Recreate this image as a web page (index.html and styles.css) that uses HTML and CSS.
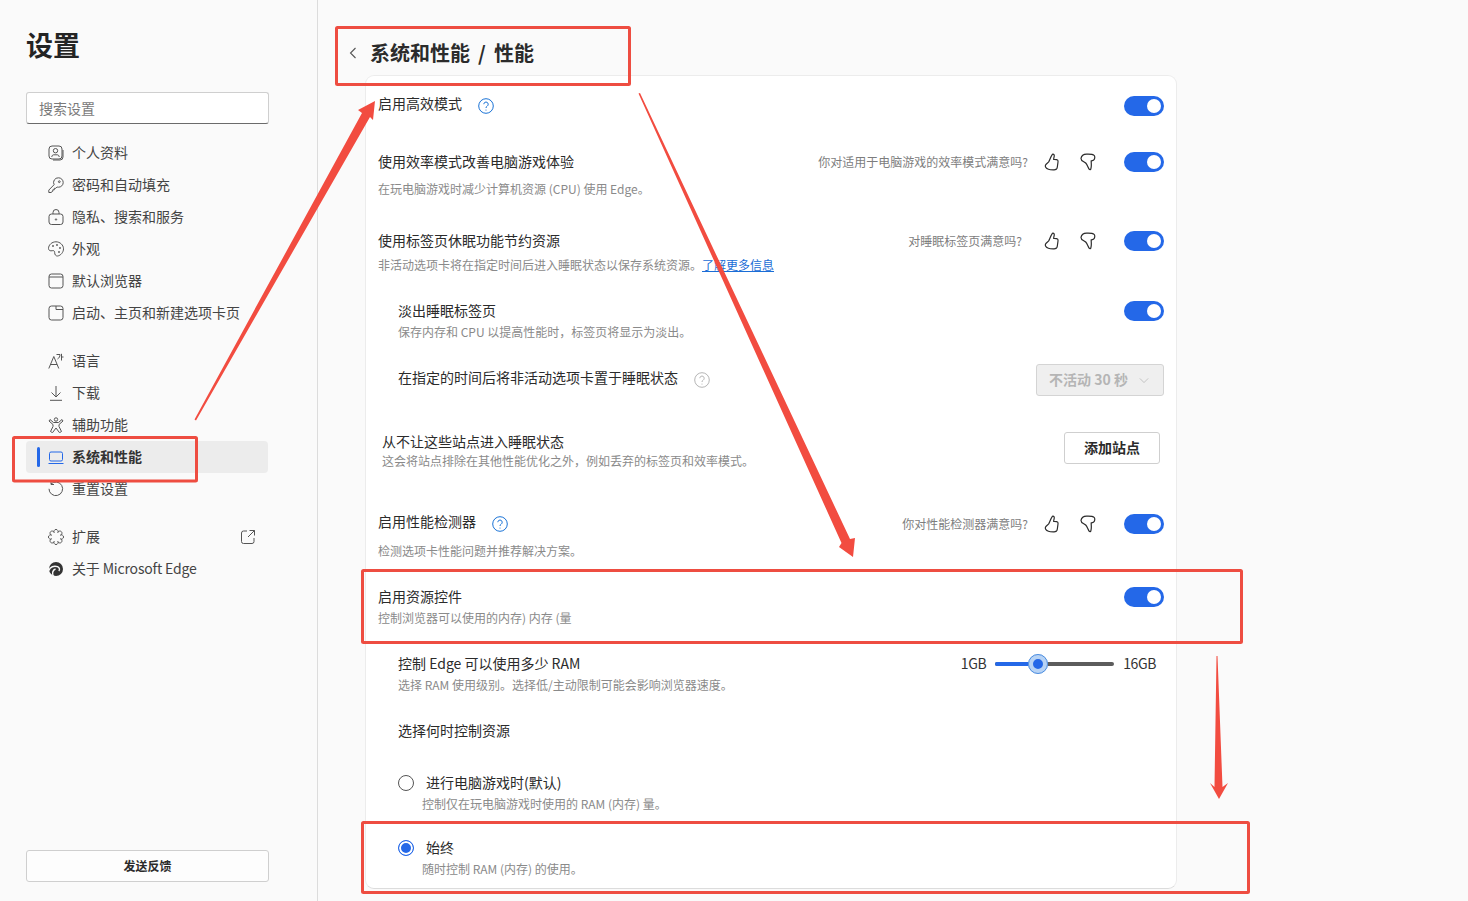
FILE: index.html
```html
<!DOCTYPE html>
<html lang="zh-CN">
<head>
<meta charset="utf-8">
<title>设置</title>
<link rel="stylesheet" href="styles.css">
</head>
<body>
<svg width="0" height="0" class="defs">
  <symbol id="up" viewBox="0 0 16 18"><path d="M8.600 1.200c1.200-.3 1.900.8 1.600 2.200-.2 1.100-.6 2-.5 3 1.300 0 3.200-.1 4 .7.700.7.300 2 .1 3.400-.2 1.700-.4 3.500-.8 4.800-.4 1.100-1.400 1.500-2.800 1.500-2 0-4.100.1-5.800-.6-1.600-.7-3.400-2.300-3-3.900.3-1.300 2.200-2.300 3.300-3.400C6 6.700 7.300 2 8.600 1.200Z" fill="none" stroke="currentColor" stroke-width="1.200"/></symbol>
  <symbol id="down" viewBox="0 0 16 18"><path d="M1 5.400C1.400 3 3.600 1.300 6.600 1.200c2.700-.1 6.100-.1 7.500 1.200 1.100 1.100.6 3 .1 4.200-.4 1-1.800 1.100-3 1.300-.1 2.400.6 5.100-.4 8.100-.2.600-.9.900-1.500.4C8 14.500 7.300 11.700 5.700 10 4 8.400 1 8.200 1 5.400Z" fill="none" stroke="currentColor" stroke-width="1.200"/></symbol>
</svg>
<div class="app">
  <aside class="sidebar">
    <h1 class="side-title">设置</h1>
    <div class="search">搜索设置</div>
    <nav class="nav">
      <div class="nav-item"><svg class="ico" viewBox="0 0 16 16"><rect x="1" y="1" width="13" height="13" rx="3"/><path d="M15 5v7a3 3 0 0 1-3 3H5"/><circle cx="7.500" cy="5.700" r="2.200"/><path d="M3.800 12c0-1.500 1-2.200 2-2.200h3.400c1 0 2 .7 2 2.200"/></svg><span>个人资料</span></div>
      <div class="nav-item"><svg class="ico" viewBox="0 0 16 16"><path d="M10.500 .8a4.700 4.700 0 0 1 0 9.400c-.5 0-1-.1-1.400-.2L7.800 11.300H6.300v1.500H4.800v1.400L3 15.500H.8v-2.400l5.300-5.400a4.700 4.700 0 0 1 4.400-6.900Z"/><circle cx="11.300" cy="4.700" r=".9"/></svg><span>密码和自动填充</span></div>
      <div class="nav-item"><svg class="ico" viewBox="0 0 16 16"><rect x="1" y="5" width="14" height="10.500" rx="2.500"/><path d="M5 5V3.500a3 3 0 0 1 6 0V5"/><circle cx="8" cy="10.500" r=".7"/></svg><span>隐私、搜索和服务</span></div>
      <div class="nav-item"><svg class="ico" viewBox="0 0 16 16"><path d="M8 .8C4 .8.500 3.800.500 7.500c0 2 2 2.700 3.700 2.200 1.500-.4 2.600.3 2.500 2-.1 1.700 1 3.500 2.900 3.300 3-.4 5.900-3.700 5.900-7.200C15.500 4 12 .8 8 .8Z"/><circle cx="5" cy="5" r=".6"/><circle cx="9" cy="4" r=".6"/><circle cx="12" cy="7" r=".6"/><circle cx="11" cy="11" r=".6"/></svg><span>外观</span></div>
      <div class="nav-item"><svg class="ico" viewBox="0 0 16 16"><rect x="1" y="1" width="14" height="14" rx="2.500"/><path d="M1 4h14"/></svg><span>默认浏览器</span></div>
      <div class="nav-item"><svg class="ico" viewBox="0 0 16 16"><rect x="1" y="1" width="14" height="14" rx="2.500"/><path d="M8 1v3.500h7"/></svg><span>启动、主页和新建选项卡页</span></div>
      <div class="nav-gap"></div>
      <div class="nav-item"><svg class="ico" viewBox="0 0 16 16"><path d="M.8 15.500 5.800 3.500l5 12M2.600 11.500h6.400M8.500 1.500H12c0 2-.8 3.500-2.500 4.500M13.500 .8v6.700M13.500 4h2"/></svg><span>语言</span></div>
      <div class="nav-item"><svg class="ico" viewBox="0 0 16 16"><path d="M8 1v11M3.500 7.500 8 12l4.500-4.500M2 15.300h12"/></svg><span>下载</span></div>
      <div class="nav-item"><svg class="ico" viewBox="0 0 16 16"><circle cx="8" cy="2.500" r="1.700"/><path d="M2 2.500 5.500 5.500h5L14 2.500l1 1.500L11 7.500v2l2.500 5-2 1.200L8 11l-3.500 4.700-2-1.200L5 9.500v-2L1 4Z"/></svg><span>辅助功能</span></div>
      <div class="nav-item nav-active"><i class="nav-bar"></i><svg class="ico ico-blue" viewBox="0 0 16 16"><rect x="1.500" y="3" width="13" height="9" rx="1.500"/><path d="M.5 14.500h15"/></svg><span>系统和性能</span></div>
      <div class="nav-item"><svg class="ico" viewBox="0 0 16 16"><path d="M3 3a6.800 6.800 0 1 1-2 4.800M3 .5V3.500h3"/></svg><span>重置设置</span></div>
      <div class="nav-gap"></div>
      <div class="nav-item"><svg class="ico" viewBox="0 0 16 16"><path d="M9.840 3.570A2.100 2.100 0 1 1 12.430 6.160 2.100 2.100 0 1 1 12.430 9.840 2.100 2.100 0 1 1 9.840 12.430 2.100 2.100 0 1 1 6.160 12.430 2.100 2.100 0 1 1 3.570 9.840 2.100 2.100 0 1 1 3.570 6.160 2.100 2.100 0 1 1 6.160 3.570 2.100 2.100 0 1 1 9.840 3.570Z"/></svg><span>扩展</span><svg class="ico ico-ext" viewBox="0 0 16 16"><path d="M7 2H3.500A2 2 0 0 0 1.500 4v8.500a2 2 0 0 0 2 2H12a2 2 0 0 0 2-2V9M9.500 1.500h5v5M14.500 1.500 8 8"/></svg></div>
      <div class="nav-item"><svg class="ico" viewBox="0 0 16 16"><circle class="edge-disc" cx="8" cy="8" r="7"/><path class="edge-swirl" d="M.8 9.500C2 6 6 4.300 9.500 5.700c2.200 1 2.500 3 1.300 4.300M5.500 15.500C3.800 12.500 4.500 9 7.500 8"/></svg><span class="nav-latin">关于 Microsoft Edge</span></div>
    </nav>
    <button class="feedback"><span class="btn-text">发送反馈</span></button>
  </aside>

  <main class="content">
    <header class="crumb">
      <svg class="back" viewBox="0 0 8 12"><path d="M6.500 1 1.500 6l5 5"/></svg>
      <h2 class="crumb-title">系统和性能 &nbsp;/ &nbsp;性能</h2>
    </header>
    <section class="card">
      <div class="row r1">
        <div class="main"><div class="title">启用高效模式<svg class="help help-on" viewBox="0 0 16 16"><circle cx="8" cy="8" r="7.300"/><path d="M5.800 6.200a2.200 2.200 0 1 1 3.400 1.900c-.8.500-1.200.9-1.200 1.900"/><circle class="dot" cx="8" cy="12" r=".6"/></svg></div></div>
        <div class="actions act-low"><i class="toggle"></i></div>
      </div>
      <div class="row r2">
        <div class="main"><div class="title">使用效率模式改善电脑游戏体验</div><div class="desc d-far">在玩电脑游戏时减少计算机资源 (CPU) 使用 Edge。</div></div>
        <div class="actions"><span class="ask">你对适用于电脑游戏的效率模式满意吗?</span><svg class="thumb"><use href="#up"/></svg><svg class="thumb thumb-d"><use href="#down"/></svg><i class="toggle"></i></div>
      </div>
      <div class="row r3">
        <div class="main"><div class="title">使用标签页休眠功能节约资源</div><div class="desc d-mid">非活动选项卡将在指定时间后进入睡眠状态以保存系统资源。<a class="link">了解更多信息</a></div></div>
        <div class="actions"><span class="ask ask-short">对睡眠标签页满意吗?</span><svg class="thumb"><use href="#up"/></svg><svg class="thumb thumb-d"><use href="#down"/></svg><i class="toggle"></i></div>
      </div>
      <div class="row r4 sub">
        <div class="main"><div class="title">淡出睡眠标签页</div><div class="desc">保存内存和 CPU 以提高性能时，标签页将显示为淡出。</div></div>
        <div class="actions"><i class="toggle"></i></div>
      </div>
      <div class="row r5 sub">
        <div class="main"><div class="title">在指定的时间后将非活动选项卡置于睡眠状态<svg class="help help-off" viewBox="0 0 16 16"><circle cx="8" cy="8" r="7.300"/><path d="M5.800 6.200a2.200 2.200 0 1 1 3.400 1.900c-.8.500-1.200.9-1.200 1.900"/><circle class="dot" cx="8" cy="12" r=".6"/></svg></div></div>
        <div class="select"><span class="btn-text">不活动 30 秒</span><svg class="caret" viewBox="0 0 12 8"><path d="M1 1.500 6 6.500l5-5"/></svg></div>
      </div>
      <div class="row r6">
        <div class="main main-6"><div class="title">从不让这些站点进入睡眠状态</div><div class="desc d-tight">这会将站点排除在其他性能优化之外，例如丢弃的标签页和效率模式。</div></div>
        <button class="add"><span class="btn-text">添加站点</span></button>
      </div>
      <div class="row r7">
        <div class="main"><div class="title">启用性能检测器<svg class="help help-on help-7" viewBox="0 0 16 16"><circle cx="8" cy="8" r="7.300"/><path d="M5.800 6.200a2.200 2.200 0 1 1 3.400 1.900c-.8.500-1.200.9-1.200 1.900"/><circle class="dot" cx="8" cy="12" r=".6"/></svg></div><div class="desc d-far7">检测选项卡性能问题并推荐解决方案。</div></div>
        <div class="actions act-low"><span class="ask">你对性能检测器满意吗?</span><svg class="thumb"><use href="#up"/></svg><svg class="thumb thumb-d"><use href="#down"/></svg><i class="toggle"></i></div>
      </div>
      <div class="row r8">
        <div class="main"><div class="title">启用资源控件</div><div class="desc">控制浏览器可以使用的内存) 内存 (量</div></div>
        <div class="actions"><i class="toggle"></i></div>
      </div>
      <div class="row r9 sub">
        <div class="main"><div class="title">控制 Edge 可以使用多少 RAM</div><div class="desc">选择 RAM 使用级别。选择低/主动限制可能会影响浏览器速度。</div></div>
        <div class="ram"><span>1GB</span><div class="slider"><i class="fill"></i><i class="knob"></i></div><span>16GB</span></div>
      </div>
      <div class="row r10 sub"><div class="title">选择何时控制资源</div></div>
      <div class="radio-row r11">
        <div class="radio-line"><i class="radio"></i><span class="title">进行电脑游戏时(默认)</span></div>
        <div class="desc radio-desc">控制仅在玩电脑游戏时使用的 RAM (内存) 量。</div>
      </div>
      <div class="radio-row r12">
        <div class="radio-line"><i class="radio radio-on"></i><span class="title">始终</span></div>
        <div class="desc radio-desc">随时控制 RAM (内存) 的使用。</div>
      </div>
    </section>
  </main>
</div>

<svg class="marks" viewBox="0 0 1468 901">
  <rect class="mark" x="336.500" y="27.500" width="293" height="57" rx="1"/>
  <rect class="mark" x="13.500" y="437.500" width="183" height="43.500" rx="1"/>
  <rect class="mark" x="362.500" y="570.500" width="879" height="72" rx="1"/>
  <rect class="mark" x="362.500" y="822.500" width="886" height="70" rx="1"/>
  <polygon class="arrow" points="194.500,419.500 362,113 358,110 375,101 373,120 370,117 196,420.500"/>
  <polygon class="arrow" points="638.500,93.500 841.500,543 839,547 853,557 855,538 850,539 640,93"/>
  <polygon class="arrow" points="1216.500,656 1214.500,787 1210,783 1219,799 1228,783 1222.500,787 1217.500,656"/>
</svg>
</body>
</html>
```
FILE: styles.css
```css
* { box-sizing: border-box; }
html, body { margin: 0; height: 100%; }
body {
  position: relative;
  width: 1468px;
  height: 901px;
  overflow: hidden;
  background: #fafafa;
  color: #2b2b2b;
  font-family: "Noto Sans CJK SC", "Noto Sans", sans-serif;
  font-size: 14px;
}
.defs { position: absolute; }
.app { display: flex; height: 901px; }

/* sidebar */
.sidebar {
  width: 318px;
  flex: none;
  display: flex;
  flex-direction: column;
  padding: 25px 48px 19px 26px;
  border-right: 1px solid #dcdcdc;
}
.side-title { margin: 0; font-size: 27px; line-height: 40px; font-weight: 700; color: #242424; }
.search {
  margin-top: 27px;
  height: 32px;
  padding: 0 12px;
  line-height: 30px;
  background: #fff;
  border: 1px solid #cfcfcf;
  border-bottom-color: #6b6b6b;
  border-radius: 3px;
  color: #7a7a7a;
}
.nav { margin: 13px 1px 0 0; flex: 1; }
.nav-item {
  position: relative;
  display: flex;
  align-items: center;
  height: 32px;
  padding-left: 22px;
  color: #444;
}
.nav-item span { margin-left: 8px; margin-top: -2px; }
.nav-latin { letter-spacing: -.17px; }
.nav-gap { height: 16px; }
.nav-active { background: #ececec; border-radius: 4px; font-weight: 700; color: #333; }
.nav-bar { position: absolute; left: 11px; top: 6px; width: 3px; height: 20px; background: #2468e8; border-radius: 2px; }
.ico { width: 16px; height: 16px; flex: none; fill: none; stroke: #555; stroke-width: 1; }
.ico-blue { stroke: #2468e8; }
.ico-ext { margin-left: auto; margin-right: 12px; }
.edge-disc { fill: #333; stroke: none; }
.edge-swirl { fill: none; stroke: #fafafa; stroke-width: 1.400; }
.btn-text { display: block; margin-top: -2px; }
.feedback {
  height: 32px;
  background: #fdfdfd;
  border: 1px solid #cfcfcf;
  border-radius: 3px;
  font: 700 12px "Noto Sans CJK SC", "Noto Sans", sans-serif;
  color: #2b2b2b;
}

/* content */
.content { flex: 1; padding: 0 291px 0 47px; display: flex; flex-direction: column; }
.crumb { display: flex; align-items: center; height: 75px; margin-left: -16px; padding-top: 31px; flex: none; }
.back { width: 8px; height: 12px; margin-right: 13px; fill: none; stroke: #555; stroke-width: 1.100; flex: none; }
.crumb-title { margin: 0; font-size: 20px; line-height: 28px; font-weight: 700; color: #2b2b2b; word-spacing: -.5px; }
.card {
  width: 812px;
  height: 814px;
  padding: 17px 12px 0;
  background: #fff;
  border: 1px solid #ececec;
  border-bottom-color: #dcdcdc;
  border-radius: 9px;
}
.row { display: flex; justify-content: space-between; align-items: flex-start; }
.sub { padding-left: 20px; }
.main { flex: none; }
.title { display: flex; align-items: center; height: 20px; font-size: 14px; line-height: 20px; color: #2b2b2b; }
.desc { font-size: 12px; line-height: 18px; margin-top: 3px; color: #8a8a8a; }
.d-far { margin-top: 9px; }
.d-mid { margin-top: 6px; }
.d-tight { margin-top: 1px; }
.d-far7 { margin-top: 11px; }
.link { color: #1a6dd6; text-decoration: underline; }
.r1 { height: 58px; }
.r2 { height: 79px; }
.r3 { height: 70px; }
.r4 { height: 67px; }
.r5 { height: 64px; }
.r6 { height: 80px; }
.r7 { height: 75px; }
.r8 { height: 67px; }
.r9 { height: 67px; }
.r10 { height: 52px; }
.main-6 { padding-left: 4px; }
.actions { display: flex; align-items: center; height: 20px; margin-top: 1px; }
.act-low { margin-top: 3px; }
.ask { font-size: 12px; color: #7d7d7d; margin: -2px 16px 0 0; }
.ask-short { margin-right: 22px; }
.thumb { width: 16px; height: 18px; color: #2b2b2b; flex: none; }
.thumb-d { margin-left: 20px; }
.toggle {
  position: relative;
  display: block;
  width: 40px;
  height: 20px;
  margin-left: 28px;
  border-radius: 10px;
  background: #2468e8;
}
.toggle::after {
  content: "";
  position: absolute;
  right: 3px;
  top: 3px;
  width: 14px;
  height: 14px;
  border-radius: 50%;
  background: #fff;
}
.help { width: 16px; height: 16px; fill: none; stroke-width: 1; margin-left: 16px; margin-top: 5px; }
.help .dot { stroke: none; }
.help-on { stroke: #1a73d6; }
.help-on .dot { fill: #1a73d6; }
.help-off { stroke: #b5b5b5; margin-top: 6px; }
.help-off .dot { fill: #b5b5b5; }
.help-7 { margin-top: 6px; }
.select {
  display: flex;
  align-items: center;
  justify-content: space-between;
  width: 128px;
  height: 32px;
  margin-top: -3px;
  padding: 0 14px 0 12px;
  background: #efefef;
  border: 1px solid #d4d4d4;
  border-radius: 3px;
  font-weight: 700;
  color: #b5b5b5;
}
.caret { width: 10px; height: 7px; fill: none; stroke: #bbb; stroke-width: 1; }
.add {
  width: 96px;
  height: 32px;
  margin-top: 1px;
  margin-right: 4px;
  background: #fff;
  border: 1px solid #cfcfcf;
  border-radius: 3px;
  font: 700 14px "Noto Sans CJK SC", "Noto Sans", sans-serif;
  color: #2b2b2b;
}
.ram { display: flex; align-items: center; height: 20px; padding-right: 8px; font-size: 14px; color: #333; letter-spacing: -.4px; }
.slider { position: relative; width: 119px; height: 4px; margin: 2px 9px 0; background: #5c5c5c; border-radius: 2px; }
.fill { position: absolute; left: 0; top: 0; width: 44px; height: 4px; background: #2468e8; border-radius: 2px; }
.knob {
  position: absolute;
  left: 33px;
  top: -8px;
  width: 20px;
  height: 20px;
  border-radius: 50%;
  background: #2468e8;
  border: 5px solid #b7d3f5;
  outline: 1px solid #4d8ee0;
  outline-offset: -1px;
}
.radio-row { padding-left: 20px; }
.r11 { height: 65px; }
.radio-line { display: flex; align-items: center; height: 20px; }
.radio { width: 16px; height: 16px; margin: 2px 12px 0 0; border-radius: 50%; border: 1px solid #555; background: #fff; flex: none; }
.radio-on { border: 1.500px solid #2468e8; background: #2468e8; box-shadow: inset 0 0 0 2px #fff; }
.radio-desc { margin-left: 24px; margin-top: 3px; }

/* reviewer's annotations drawn over the page */
.marks { position: absolute; left: 0; top: 0; width: 1468px; height: 901px; pointer-events: none; }
.mark { fill: none; stroke: #ee4d41; stroke-width: 3; }
.arrow { fill: #f24c40; }
```
